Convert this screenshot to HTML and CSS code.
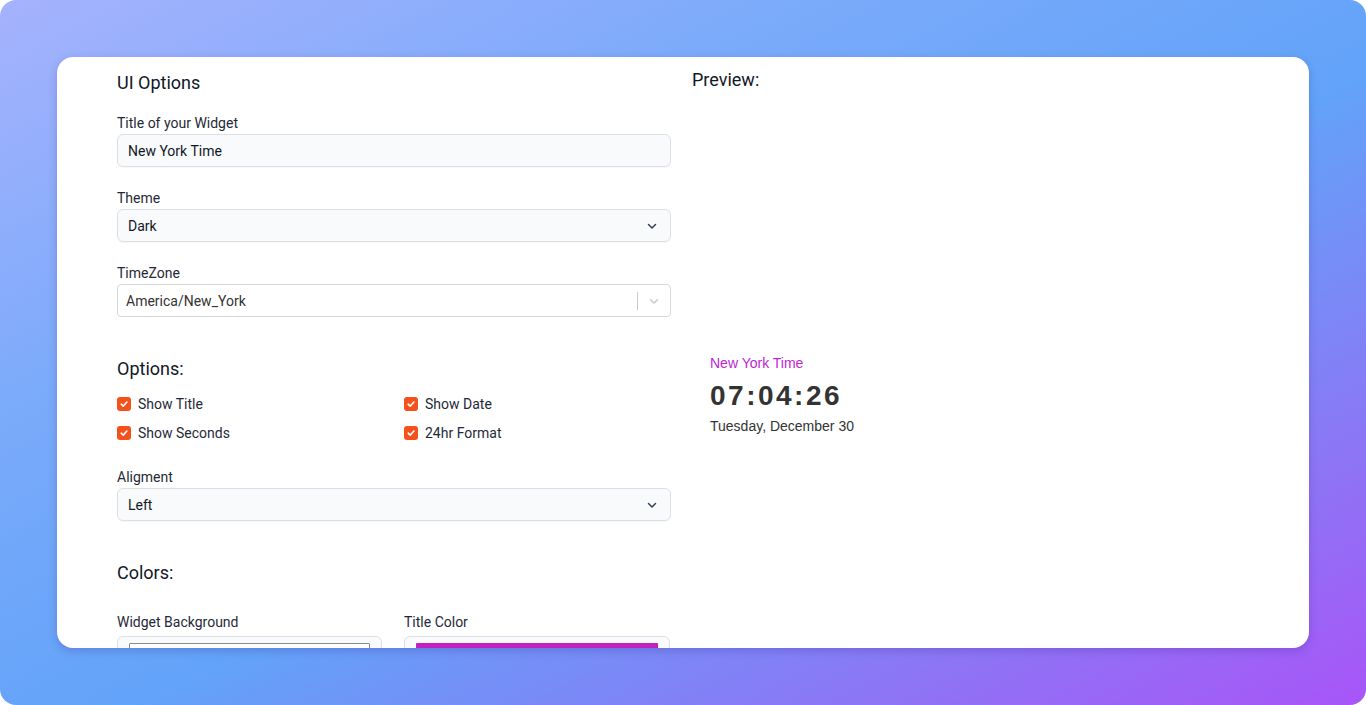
FILE: index.html
```html
<!DOCTYPE html>
<html lang="en">
<head>
<meta charset="utf-8">
<title>Clock Widget Options</title>
<link rel="stylesheet" href="styles.css">
</head>
<body>
<div class="backdrop">
  <div class="card">
    <div class="form-col">
      <h2 class="heading">UI Options</h2>

      <div class="field">
        <label class="label">Title of your Widget</label>
        <div class="input">New York Time</div>
      </div>

      <div class="field">
        <label class="label">Theme</label>
        <div class="input select">
          <span>Dark</span>
          <svg class="chev" width="12" height="12" viewBox="0 0 12 12"><path d="M2.5 4.5 6 8l3.5-3.5" fill="none" stroke="#374151" stroke-width="1.5" stroke-linecap="round" stroke-linejoin="round"/></svg>
        </div>
      </div>

      <div class="field">
        <label class="label">TimeZone</label>
        <div class="rselect">
          <span class="rvalue">America/New_York</span>
          <span class="rsep"></span>
          <svg class="rchev" width="14" height="14" viewBox="0 0 20 20"><path d="M4.516 7.548c.436-.446 1.043-.481 1.576 0L10 11.295l3.908-3.747c.533-.481 1.141-.446 1.574 0 .436.445.408 1.197 0 1.615-.406.418-4.695 4.502-4.695 4.502a1.095 1.095 0 0 1-1.576 0S4.924 9.581 4.516 9.163c-.409-.418-.436-1.170 0-1.615z" fill="#cccccc"/></svg>
        </div>
      </div>

      <h2 class="heading section">Options:</h2>
      <div class="checks">
        <label class="check"><span class="box"><svg width="10" height="10" viewBox="0 0 10 10"><path d="M2.2 5.2 4.2 7.1 7.9 3" fill="none" stroke="#fff" stroke-width="1.6" stroke-linecap="round" stroke-linejoin="round"/></svg></span>Show Title</label>
        <label class="check"><span class="box"><svg width="10" height="10" viewBox="0 0 10 10"><path d="M2.2 5.2 4.2 7.1 7.9 3" fill="none" stroke="#fff" stroke-width="1.6" stroke-linecap="round" stroke-linejoin="round"/></svg></span>Show Date</label>
        <label class="check"><span class="box"><svg width="10" height="10" viewBox="0 0 10 10"><path d="M2.2 5.2 4.2 7.1 7.9 3" fill="none" stroke="#fff" stroke-width="1.6" stroke-linecap="round" stroke-linejoin="round"/></svg></span>Show Seconds</label>
        <label class="check"><span class="box"><svg width="10" height="10" viewBox="0 0 10 10"><path d="M2.2 5.2 4.2 7.1 7.9 3" fill="none" stroke="#fff" stroke-width="1.6" stroke-linecap="round" stroke-linejoin="round"/></svg></span>24hr Format</label>
      </div>

      <div class="field align-field">
        <label class="label">Aligment</label>
        <div class="input select">
          <span>Left</span>
          <svg class="chev" width="12" height="12" viewBox="0 0 12 12"><path d="M2.5 4.5 6 8l3.5-3.5" fill="none" stroke="#374151" stroke-width="1.5" stroke-linecap="round" stroke-linejoin="round"/></svg>
        </div>
      </div>

      <h2 class="heading section colors-heading">Colors:</h2>
      <div class="colors">
        <div class="color-field">
          <label class="label">Widget Background</label>
          <div class="color-input"><span class="swatch swatch-white"></span></div>
        </div>
        <div class="color-field">
          <label class="label">Title Color</label>
          <div class="color-input"><span class="swatch swatch-magenta"></span></div>
        </div>
      </div>
    </div>

    <div class="preview-col">
      <h2 class="heading preview-heading">Preview:</h2>
      <div class="widget">
        <div class="w-title">New York Time</div>
        <div class="w-time">07:04:26</div>
        <div class="w-date">Tuesday, December 30</div>
      </div>
    </div>
  </div>
</div>
</body>
</html>
```

FILE: styles.css
```css
* { box-sizing: border-box; }
html, body { margin: 0; padding: 0; background: #ffffff; }
body { font-family: Roboto, "Liberation Sans", Arial, sans-serif; color: #1f2937; }

.backdrop {
  width: 1366px;
  height: 705px;
  border-radius: 16px;
  padding: 57px;
  background: linear-gradient(to bottom right, #a6b2fd 0%, #7aaafa 30%, #62a3f9 55%, #8a78f5 80%, #a855f7 100%);
}

.card {
  height: 591px;
  background: #ffffff;
  border-radius: 16px;
  overflow: hidden;
  display: flex;
  padding: 12px 60px 0 60px;
  gap: 21px;
  box-shadow: 0 3px 8px rgba(60, 40, 140, 0.25);
}

.form-col { width: 554px; flex: none; }
.preview-col { flex: 1; }

.heading {
  margin: 0;
  font-size: 18px;
  line-height: 27px;
  font-weight: 400;
  color: #111827;
}
.form-col > .heading:first-child { margin-bottom: 17px; }
.section { margin-top: 38px; margin-bottom: 12px; }
.preview-heading { margin-top: -3px; }

.field { margin-bottom: 21px; }
.label {
  display: block;
  font-size: 14px;
  line-height: 20px;
  color: #1f2937;
  margin-bottom: 1px;
}

.input {
  height: 33px;
  background: #f9fafb;
  border: 1px solid #dcdfe4;
  border-radius: 6px;
  padding: 0 10px;
  display: flex;
  align-items: center;
  font-size: 14px;
  color: #111827;
  box-shadow: 0 1px 1px rgba(0,0,0,0.03);
}
.select { justify-content: space-between; padding-right: 12px; }
.chev { display: block; }

.rselect {
  height: 33px;
  background: #ffffff;
  border: 1px solid #d6d8dc;
  border-radius: 4px;
  display: flex;
  align-items: center;
  padding-left: 8px;
  font-size: 14px;
  color: #333333;
}
.rvalue { flex: 1; }
.rsep { width: 1px; height: 18px; background: #cccccc; margin-right: 9px; }
.rchev { margin-right: 9px; display: block; }

.checks {
  display: grid;
  grid-template-columns: 287px 1fr;
  row-gap: 9px;
}
.check {
  display: flex;
  align-items: center;
  font-size: 14px;
  line-height: 20px;
  color: #1f2937;
}
.box {
  width: 14px;
  height: 14px;
  border-radius: 3px;
  background: #f5511d;
  display: flex;
  align-items: center;
  justify-content: center;
  margin-right: 7px;
}
.box svg { display: block; }

.align-field { margin-top: 24px; margin-bottom: 0; }

.colors {
  display: grid;
  grid-template-columns: 265px 266px;
  column-gap: 22px;
  margin-top: 26px;
}
.colors-heading { margin-bottom: 0; }
.color-field .label { margin-bottom: 4px; }
.color-input {
  height: 40px;
  border: 1px solid #dcdfe4;
  border-radius: 6px;
  background: #f9fafb;
  padding: 6px 11px;
}
.swatch { display: block; height: 26px; border-radius: 1px; }
.swatch-white { background: #ffffff; border: 1px solid #8a8a8a; }
.swatch-magenta { background: #c122bd; }

.widget {
  margin-top: 261px;
  padding-left: 18px;
  font-family: "Liberation Sans", Arial, sans-serif;
  color: #333333;
}
.w-title { font-size: 14px; line-height: 18px; color: #c026d3; }
.w-time {
  font-size: 28px;
  line-height: 34px;
  font-weight: 700;
  letter-spacing: 2.5px;
  margin-top: 7px;
}
.w-date { font-size: 14px; line-height: 18px; margin-top: 4px; }
```
